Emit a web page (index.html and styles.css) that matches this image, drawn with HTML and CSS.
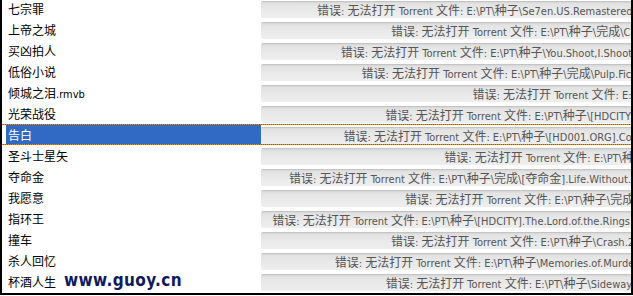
FILE: index.html
```html
<!DOCTYPE html>
<html lang="zh-CN">
<head>
	<meta charset="UTF-8">
	<title>torrent list</title>
	<link rel="stylesheet" href="styles.css">
</head>
<body>
	<div class="win">
		<ul class="list">
			<li class="row">
				<div class="name">七宗罪</div>
				<div class="bar"><span class="zh">错误</span>: <span class="zh">无法打开</span> Torrent <span class="zh">文件</span>: E:\PT\<span class="zh">种子</span>\Se7en.US.Remastered.1995.720p.BluRay.x264.torrent</div>
			</li>
			<li class="row">
				<div class="name">上帝之城</div>
				<div class="bar"><span class="zh">错误</span>: <span class="zh">无法打开</span> Torrent <span class="zh">文件</span>: E:\PT\<span class="zh">种子</span>\<span class="zh">完成</span>\City.Of.God.2002.720p.HD.torrent</div>
			</li>
			<li class="row">
				<div class="name">买凶拍人</div>
				<div class="bar"><span class="zh">错误</span>: <span class="zh">无法打开</span> Torrent <span class="zh">文件</span>: E:\PT\<span class="zh">种子</span>\You.Shoot,I.Shoot.2001.DVDRip.XviD-CHD.torrent</div>
			</li>
			<li class="row">
				<div class="name">低俗小说</div>
				<div class="bar"><span class="zh">错误</span>: <span class="zh">无法打开</span> Torrent <span class="zh">文件</span>: E:\PT\<span class="zh">种子</span>\<span class="zh">完成</span>\Pulp.Fiction.1994.720p.HD.x264.torrent</div>
			</li>
			<li class="row">
				<div class="name">倾城之泪<span class="en">.rmvb</span></div>
				<div class="bar"><span class="zh">错误</span>: <span class="zh">无法打开</span> Torrent <span class="zh">文件</span>: E:\PT\<span class="zh">种子</span>\<span class="zh">完成</span>\<span class="zh">倾城之泪</span>.torrent</div>
			</li>
			<li class="row">
				<div class="name">光荣战役</div>
				<div class="bar"><span class="zh">错误</span>: <span class="zh">无法打开</span> Torrent <span class="zh">文件</span>: E:\PT\<span class="zh">种子</span>\[HDCITY].Glory.1989.720p.BDRip.torrent</div>
			</li>
			<li class="row sel">
				<div class="name">告白</div>
				<div class="bar"><span class="zh">错误</span>: <span class="zh">无法打开</span> Torrent <span class="zh">文件</span>: E:\PT\<span class="zh">种子</span>\[HD001.ORG].Confessions.2010.720p.HD.torrent</div>
			</li>
			<li class="row">
				<div class="name">圣斗士星矢</div>
				<div class="bar"><span class="zh">错误</span>: <span class="zh">无法打开</span> Torrent <span class="zh">文件</span>: E:\PT\<span class="zh">种子</span>\<span class="zh">圣斗士星矢</span>.Hades.1.torrent</div>
			</li>
			<li class="row">
				<div class="name">夺命金</div>
				<div class="bar"><span class="zh">错误</span>: <span class="zh">无法打开</span> Torrent <span class="zh">文件</span>: E:\PT\<span class="zh">种子</span>\<span class="zh">完成</span>\[<span class="zh">夺命金</span>].Life.Without.Principle.2011.720p.DTS.torrent</div>
			</li>
			<li class="row">
				<div class="name">我愿意</div>
				<div class="bar"><span class="zh">错误</span>: <span class="zh">无法打开</span> Torrent <span class="zh">文件</span>: E:\PT\<span class="zh">种子</span>\<span class="zh">完成</span>\<span class="zh">我愿意</span>.2012.DVD.XviD.torrent</div>
			</li>
			<li class="row">
				<div class="name">指环王</div>
				<div class="bar"><span class="zh">错误</span>: <span class="zh">无法打开</span> Torrent <span class="zh">文件</span>: E:\PT\<span class="zh">种子</span>\[HDCITY].The.Lord.of.the.Rings.The.Return.of.the.King.1.torrent</div>
			</li>
			<li class="row">
				<div class="name">撞车</div>
				<div class="bar"><span class="zh">错误</span>: <span class="zh">无法打开</span> Torrent <span class="zh">文件</span>: E:\PT\<span class="zh">种子</span>\Crash.2004.1080p.BluRay.H264.torrent</div>
			</li>
			<li class="row">
				<div class="name">杀人回忆</div>
				<div class="bar"><span class="zh">错误</span>: <span class="zh">无法打开</span> Torrent <span class="zh">文件</span>: E:\PT\<span class="zh">种子</span>\Memories.of.Murder.2003.720p.BluRay.DTS.torrent</div>
			</li>
			<li class="row">
				<div class="name">杯酒人生</div>
				<div class="bar"><span class="zh">错误</span>: <span class="zh">无法打开</span> Torrent <span class="zh">文件</span>: E:\PT\<span class="zh">种子</span>\Sideways.2004.720p.BluRay.DTS.torrent</div>
			</li>
		</ul>
		<div class="mark">www.guoy.cn</div>
	</div>
</body>
</html>
```

FILE: styles.css
```css
	html, body {
		margin: 0;
		padding: 0;
		background: #fff;
	}

	.win {
		position: relative;
		box-sizing: border-box;
		width: 633px;
		height: 295px;
		border: 2px solid #000;
		border-top: none;
		overflow: hidden;
		font-family: "DejaVu Sans Condensed", "DejaVu Sans", "Noto Sans CJK SC", sans-serif;
		font-stretch: condensed;
		font-size: 11px;
	}

	.list {
		list-style: none;
		margin: -2px 0 0;
		padding: 0;
	}

	.row {
		position: relative;
		display: flex;
		height: 21px;
	}

	.name {
		flex: none;
		box-sizing: border-box;
		width: 255px;
		margin-left: 4px;
		padding-left: 2px;
		line-height: 21px;
		font-family: "Noto Sans CJK SC", sans-serif;
		font-size: 12px;
		color: #000;
		white-space: nowrap;
	}
	.name .en {
		font-family: "DejaVu Sans Condensed", "DejaVu Sans", sans-serif;
		font-size: 11px;
	}

	.bar {
		flex: none;
		box-sizing: border-box;
		width: 535px;
		height: 17px;
		margin-top: 3px;
		padding-right: 6px;
		border-radius: 2px 0 0 2px;
		background: linear-gradient(#c4c4c4 0, #c4c4c4 1px, #d6d6d6 1px, #e3e3e3 3px, #eaeaea 60%, #eeeeee 100%);
		color: #555;
		line-height: 17px;
		text-align: right;
		white-space: nowrap;
	}

	.zh {
		font-family: "Noto Sans CJK SC", sans-serif;
		font-size: 12px;
	}

	/* selected row */
	.sel .name {
		background: #316ac5;
		color: #fff;
	}
	.sel::before,
	.sel::after {
		content: "";
		position: absolute;
		left: 0;
		right: 0;
		height: 1px;
		background: repeating-linear-gradient(90deg, #ce953a 0, #ce953a 1px, #316ac5 1px, #316ac5 2px);
	}
	.sel::before {
		top: 0;
	}
	.sel::after {
		bottom: 0;
	}

	.mark {
		position: absolute;
		left: 62px;
		top: 272px;
		font-family: "DejaVu Sans", sans-serif;
		font-weight: bold;
		font-size: 17px;
		line-height: 17px;
		letter-spacing: 0.4px;
		color: #101a5e;
	}
```
